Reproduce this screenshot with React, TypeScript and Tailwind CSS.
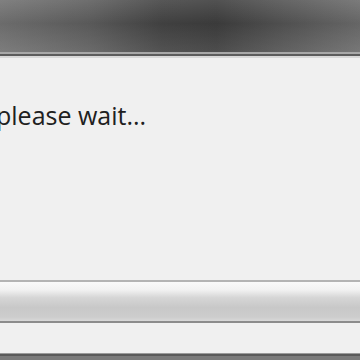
export default function App() {
  return (
    <div className="w-[360px] h-[360px] overflow-hidden flex flex-col bg-[#f0f0f0]">
      {/* title bar */}
      <div className="relative h-[52px] bg-[linear-gradient(90deg,#727272_0%,#5e5e5e_25%,#444444_45%,#3e3e3e_60%,#505050_75%,#6c6c6c_100%)]">
        <div className="absolute inset-0 bg-[linear-gradient(180deg,rgba(255,255,255,0.1)_0%,rgba(0,0,0,0.06)_45%,rgba(255,255,255,0.08)_100%)]" />
      </div>
      <div className="h-[2px] bg-[#a8a8a8]" />
      <div className="h-[2px] bg-[#5c5c5c]" />
      <div className="h-[2px] bg-[#d8d8d8]" />

      {/* content */}
      <div className="flex-1 flex flex-col">
        <div className="h-[42px]" />
        <p className="-ml-[4px] text-[25px] leading-[30px] font-medium text-[#202020] [font-family:'Open_Sans',sans-serif]">
          please wait...
        </p>
        <div className="flex-1" />
        {/* progress bar */}
        <div className="h-[43px] flex flex-col">
          <div className="h-[2px] bg-[#b4b4b4]" />
          <div className="flex-1 bg-[linear-gradient(180deg,#fafafa_0%,#f2f2f2_20%,#d6d6d6_40%,#c8c8c8_65%,#cdcdcd_90%,#d8d8d8_100%)]" />
          <div className="h-[2px] bg-[#8c8c8c]" />
        </div>
        <div className="h-[30px]" />
      </div>
      <div className="h-[1px] bg-[#9a9a9a]" />
      <div className="h-[2px] bg-[#5a5a5a]" />
      <div className="h-[4px] bg-[#7a7a7a]" />
    </div>
  );
}
